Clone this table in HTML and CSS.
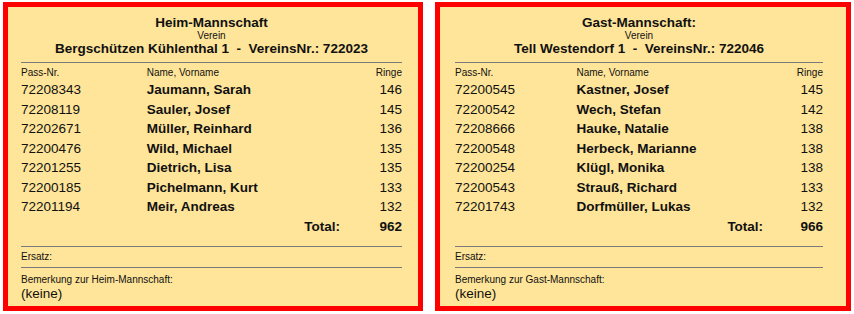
FILE: index.html
```html
<!DOCTYPE html>
<html lang="de">
<head>
<meta charset="utf-8">
<link rel="stylesheet" href="styles.css">
</head>
<body>
<div class="sheet">
  <section class="team team--home">
    <div class="content">
      <div class="title">Heim-Mannschaft</div>
      <div class="sub">Verein</div>
      <div class="club">Bergschützen Kühlenthal 1 &nbsp;-&nbsp; VereinsNr.: 722023</div>
      <div class="rule rule--top"></div>
      <div class="row row--head"><span>Pass-Nr.</span><span>Name, Vorname</span><span class="num">Ringe</span></div>
      <div class="row"><span>72208343</span><span class="name">Jaumann, Sarah</span><span class="num">146</span></div>
      <div class="row"><span>72208119</span><span class="name">Sauler, Josef</span><span class="num">145</span></div>
      <div class="row"><span>72202671</span><span class="name">Müller, Reinhard</span><span class="num">136</span></div>
      <div class="row"><span>72200476</span><span class="name">Wild, Michael</span><span class="num">135</span></div>
      <div class="row"><span>72201255</span><span class="name">Dietrich, Lisa</span><span class="num">135</span></div>
      <div class="row"><span>72200185</span><span class="name">Pichelmann, Kurt</span><span class="num">133</span></div>
      <div class="row"><span>72201194</span><span class="name">Meir, Andreas</span><span class="num">132</span></div>
      <div class="row row--total"><span></span><span class="total-label">Total:</span><span class="num total">962</span></div>
      <div class="rule rule--mid"></div>
      <div class="label label--ersatz">Ersatz:</div>
      <div class="rule rule--low"></div>
      <div class="label label--note">Bemerkung zur Heim-Mannschaft:</div>
      <div class="note">(keine)</div>
    </div>
  </section>
  <section class="team team--guest">
    <div class="content">
      <div class="title">Gast-Mannschaft:</div>
      <div class="sub">Verein</div>
      <div class="club">Tell Westendorf 1 &nbsp;-&nbsp; VereinsNr.: 722046</div>
      <div class="rule rule--top"></div>
      <div class="row row--head"><span>Pass-Nr.</span><span>Name, Vorname</span><span class="num">Ringe</span></div>
      <div class="row"><span>72200545</span><span class="name">Kastner, Josef</span><span class="num">145</span></div>
      <div class="row"><span>72200542</span><span class="name">Wech, Stefan</span><span class="num">142</span></div>
      <div class="row"><span>72208666</span><span class="name">Hauke, Natalie</span><span class="num">138</span></div>
      <div class="row"><span>72200548</span><span class="name">Herbeck, Marianne</span><span class="num">138</span></div>
      <div class="row"><span>72200254</span><span class="name">Klügl, Monika</span><span class="num">138</span></div>
      <div class="row"><span>72200543</span><span class="name">Strauß, Richard</span><span class="num">133</span></div>
      <div class="row"><span>72201743</span><span class="name">Dorfmüller, Lukas</span><span class="num">132</span></div>
      <div class="row row--total"><span></span><span class="total-label">Total:</span><span class="num total">966</span></div>
      <div class="rule rule--mid"></div>
      <div class="label label--ersatz">Ersatz:</div>
      <div class="rule rule--low"></div>
      <div class="label label--note">Bemerkung zur Gast-Mannschaft:</div>
      <div class="note">(keine)</div>
    </div>
  </section>
</div>
</body>
</html>
```

FILE: styles.css
```css
html, body {
  margin: 0;
  padding: 0;
  background: #ffffff;
}

body {
  font-family: "Liberation Sans", Arial, sans-serif;
  color: #111111;
}

.sheet {
  display: flex;
  gap: 12px;
  padding: 2px 3px 0 3px;
}

.team {
  box-sizing: border-box;
  height: 309px;
  border: 5px solid #ff0000;
  background: #ffe599;
}

.team--home {
  width: 420px;
  padding: 0 16px 0 13px;
}

.team--guest {
  width: 416px;
  padding: 0 23px 0 15px;
}

.content {
  display: flex;
  flex-direction: column;
}

.title {
  padding-top: 8px;
  font-size: 13.5px;
  line-height: 15px;
  font-weight: bold;
  text-align: center;
}

.sub {
  font-size: 10px;
  line-height: 11px;
  text-align: center;
}

.club {
  font-size: 13.5px;
  line-height: 16px;
  font-weight: bold;
  text-align: center;
}

.rule {
  height: 1px;
  background: #7a7a7a;
}

.rule--top { margin-top: 5px; }
.rule--mid { margin-top: 10px; }
.rule--low { margin-top: 4px; }

.row {
  display: grid;
  grid-template-columns: 33% 1fr 16%;
  align-items: center;
  height: 19.5px;
  font-size: 13.5px;
  line-height: 16px;
}

.row--head {
  margin-top: 4px;
  height: 13.3px;
  font-size: 10px;
  line-height: 12px;
  align-items: start;
}

.num {
  text-align: right;
}

.name {
  font-weight: bold;
}

.total-label {
  font-weight: bold;
  text-align: right;
  padding-right: 1px;
}

.total {
  font-weight: bold;
}

.label {
  font-size: 10px;
  line-height: 12px;
}

.label--ersatz { margin-top: 4px; }
.label--note { margin-top: 6px; }

.note {
  font-size: 13.5px;
  line-height: 15px;
}
```
